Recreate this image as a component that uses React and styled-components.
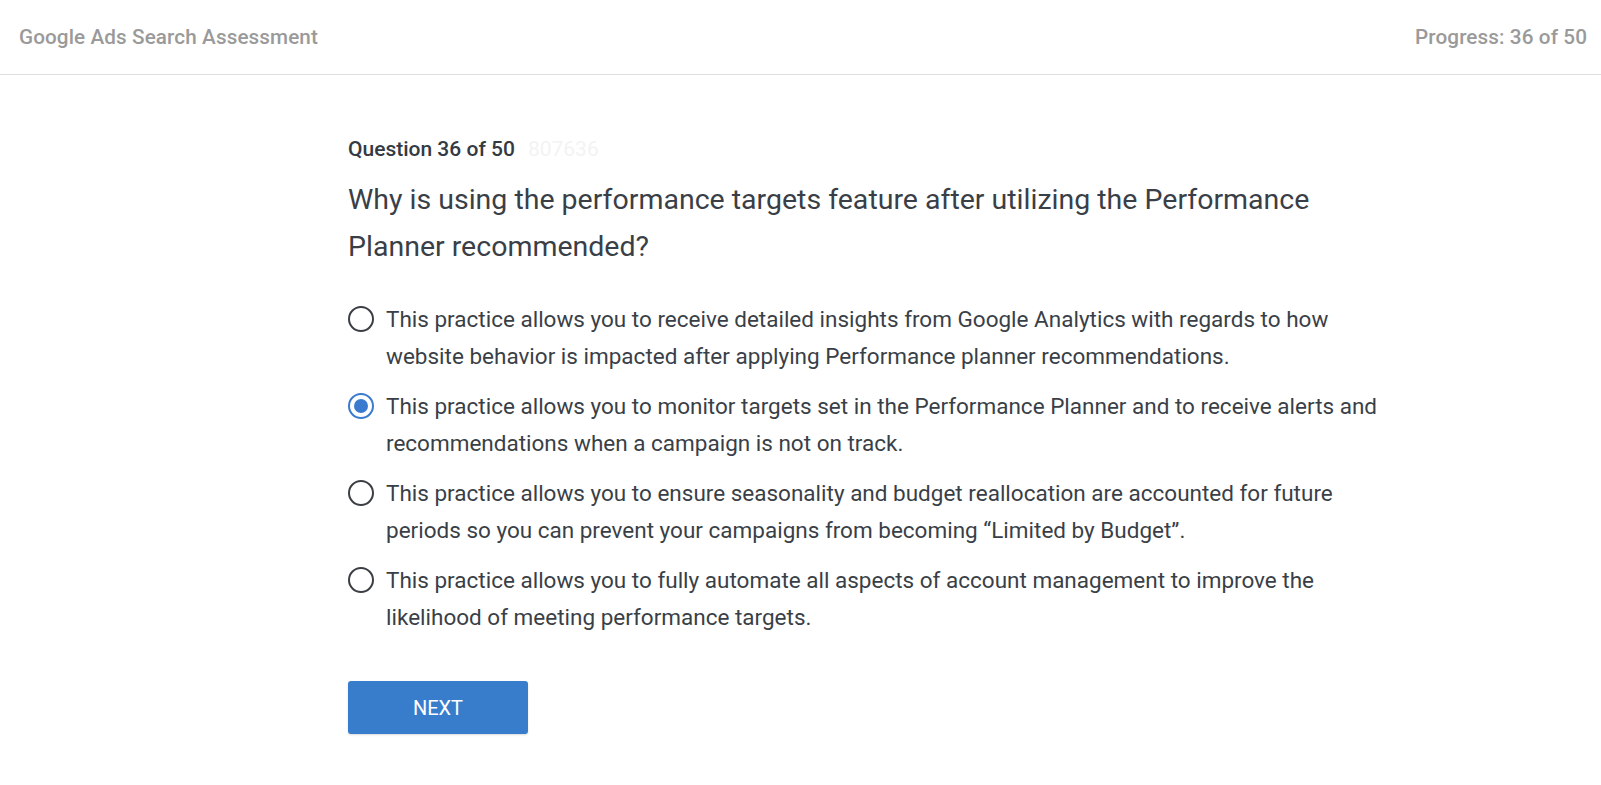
import React, { useState } from "react";
import styled, { createGlobalStyle } from "styled-components";

const GlobalStyle = createGlobalStyle`
  html, body {
    margin: 0;
    padding: 0;
    background: #ffffff;
    font-family: Roboto, "Liberation Sans", Arial, sans-serif;
  }
  * { box-sizing: border-box; }
`;

const Page = styled.div`
  min-height: 785px;
  background: #ffffff;
`;

const Header = styled.header`
  height: 75px;
  display: flex;
  align-items: center;
  justify-content: space-between;
  padding: 0 14px 0 19px;
  border-bottom: 1px solid #dedede;
`;

const HeaderText = styled.div`
  font-size: 20.7px;
  font-weight: 500;
  color: #9a9a9a;
  letter-spacing: 0.1px;
`;

const Main = styled.main`
  margin-left: 348px;
  width: 1042px;
  padding-top: 63px;
`;

const Label = styled.div`
  display: flex;
  align-items: baseline;
  gap: 13px;
  font-size: 21px;
  line-height: 23px;
  font-weight: 500;
  color: #333a44;
`;

const Ghost = styled.span`
  font-weight: 400;
  color: #f3f3f3;
`;

const Title = styled.h1`
  margin: 15px 0 31px;
  font-size: 28.5px;
  line-height: 47px;
  font-weight: 400;
  color: #3a3f47;
`;

const Options = styled.div`
  display: flex;
  flex-direction: column;
  gap: 14px;
`;

const Option = styled.label`
  display: flex;
  align-items: flex-start;
  gap: 12px;
  cursor: pointer;
`;

const Radio = styled.span`
  flex: none;
  width: 26px;
  height: 26px;
  margin-top: 5px;
  border-radius: 50%;
  border: 2px solid ${(p) => (p.$checked ? "#3a7bd0" : "#3b3f45")};
  display: flex;
  align-items: center;
  justify-content: center;

  &::after {
    content: "";
    width: 14px;
    height: 14px;
    border-radius: 50%;
    background: #3a7bd0;
    display: ${(p) => (p.$checked ? "block" : "none")};
  }
`;

const OptionText = styled.span`
  font-size: 22.5px;
  line-height: 36.5px;
  color: #3a3f47;
`;

const NextButton = styled.button`
  margin-top: 46px;
  width: 180px;
  height: 53px;
  border: none;
  border-radius: 3px;
  background: #387dcc;
  color: #ffffff;
  font-family: inherit;
  font-size: 20px;
  font-weight: 400;
  text-transform: uppercase;
  box-shadow: 0 1px 2px rgba(0, 0, 0, 0.15);
  cursor: pointer;
`;

const answers = [
  "This practice allows you to receive detailed insights from Google Analytics with regards to how website behavior is impacted after applying Performance planner recommendations.",
  "This practice allows you to monitor targets set in the Performance Planner and to receive alerts and recommendations when a campaign is not on track.",
  "This practice allows you to ensure seasonality and budget reallocation are accounted for future periods so you can prevent your campaigns from becoming \u201cLimited by Budget\u201d.",
  "This practice allows you to fully automate all aspects of account management to improve the likelihood of meeting performance targets.",
];

export default function App() {
  const [selected, setSelected] = useState(1);
  return (
    <Page>
      <GlobalStyle />
      <Header>
        <HeaderText>Google Ads Search Assessment</HeaderText>
        <HeaderText>Progress: 36 of 50</HeaderText>
      </Header>
      <Main>
        <Label>
          Question 36 of 50 <Ghost>807636</Ghost>
        </Label>
        <Title>
          Why is using the performance targets feature after utilizing the Performance Planner recommended?
        </Title>
        <Options>
          {answers.map((a, i) => (
            <Option key={i} onClick={() => setSelected(i)}>
              <Radio $checked={selected === i} />
              <OptionText>{a}</OptionText>
            </Option>
          ))}
        </Options>
        <NextButton>Next</NextButton>
      </Main>
    </Page>
  );
}
